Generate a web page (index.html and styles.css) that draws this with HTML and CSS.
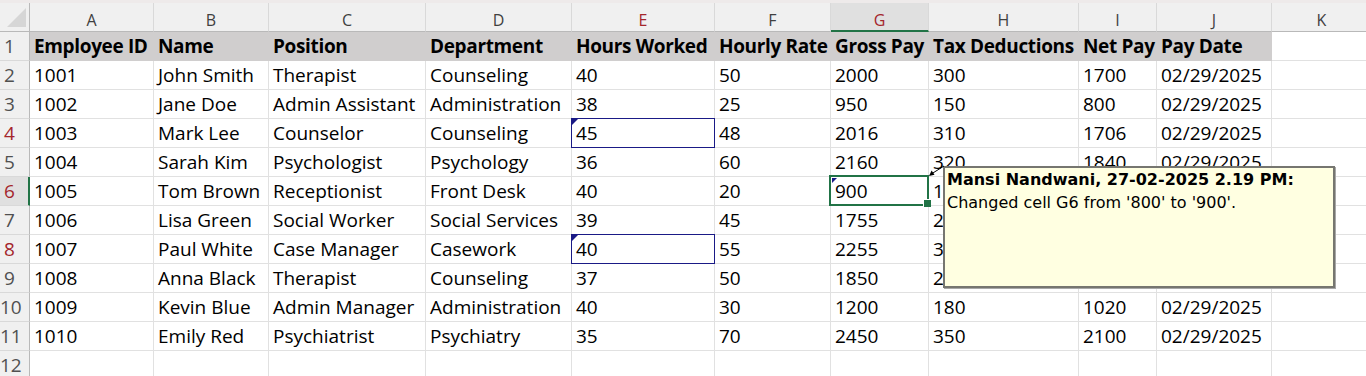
FILE: index.html
```html
<!DOCTYPE html>
<html lang="en">
<head>
<meta charset="utf-8">
<title>Payroll sheet</title>
<link rel="stylesheet" href="styles.css">
</head>
<body>
<div class="topbar"></div>
<div class="sheet">
  <div class="corner"><svg class="corner-tri" width="29" height="28" viewBox="0 0 29 28"><polygon points="26,5 26,24 7,24" fill="#d6d6d6"/></svg></div>
  <div class="h">A</div><div class="h">B</div><div class="h">C</div><div class="h">D</div>
  <div class="h red">E</div><div class="h">F</div><div class="h red active-col">G</div><div class="h">H</div>
  <div class="h">I</div><div class="h">J</div><div class="h">K</div>

  <div class="r">1</div>
  <div class="c t">Employee ID</div><div class="c t">Name</div><div class="c t">Position</div><div class="c t">Department</div><div class="c t">Hours Worked</div><div class="c t">Hourly Rate</div><div class="c t">Gross Pay</div><div class="c t">Tax Deductions</div><div class="c t">Net Pay</div><div class="c t">Pay Date</div><div class="c"></div>

  <div class="r">2</div>
  <div class="c">1001</div><div class="c">John Smith</div><div class="c">Therapist</div><div class="c">Counseling</div><div class="c">40</div><div class="c">50</div><div class="c">2000</div><div class="c">300</div><div class="c">1700</div><div class="c">02/29/2025</div><div class="c"></div>

  <div class="r">3</div>
  <div class="c">1002</div><div class="c">Jane Doe</div><div class="c">Admin Assistant</div><div class="c">Administration</div><div class="c">38</div><div class="c">25</div><div class="c">950</div><div class="c">150</div><div class="c">800</div><div class="c">02/29/2025</div><div class="c"></div>

  <div class="r red">4</div>
  <div class="c">1003</div><div class="c">Mark Lee</div><div class="c">Counselor</div><div class="c">Counseling</div><div class="c changed">45</div><div class="c">48</div><div class="c">2016</div><div class="c">310</div><div class="c">1706</div><div class="c">02/29/2025</div><div class="c"></div>

  <div class="r">5</div>
  <div class="c">1004</div><div class="c">Sarah Kim</div><div class="c">Psychologist</div><div class="c">Psychology</div><div class="c">36</div><div class="c">60</div><div class="c">2160</div><div class="c">320</div><div class="c">1840</div><div class="c">02/29/2025</div><div class="c"></div>

  <div class="r red active-row">6</div>
  <div class="c">1005</div><div class="c">Tom Brown</div><div class="c">Receptionist</div><div class="c">Front Desk</div><div class="c">40</div><div class="c">20</div>
  <div class="c selected">900
    <span class="handle"></span>
    <svg class="arrow" width="20" height="14" viewBox="0 0 20 14"><line x1="3.5" y1="10.5" x2="17" y2="2" stroke="#000" stroke-width="1"/><polygon points="2,12 7.5,10.8 4.6,6.6" fill="#000"/></svg>
    <div class="note">
      <div class="note-author">Mansi Nandwani, 27-02-2025 2.19 PM:</div>
      <div class="note-text">Changed cell G6 from '800' to '900'.</div>
    </div>
  </div>
  <div class="c">120</div><div class="c"></div><div class="c"></div><div class="c"></div>

  <div class="r">7</div>
  <div class="c">1006</div><div class="c">Lisa Green</div><div class="c">Social Worker</div><div class="c">Social Services</div><div class="c">39</div><div class="c">45</div><div class="c">1755</div><div class="c">263</div><div class="c"></div><div class="c"></div><div class="c"></div>

  <div class="r red">8</div>
  <div class="c">1007</div><div class="c">Paul White</div><div class="c">Case Manager</div><div class="c">Casework</div><div class="c changed">40</div><div class="c">55</div><div class="c">2255</div><div class="c">338</div><div class="c"></div><div class="c"></div><div class="c"></div>

  <div class="r">9</div>
  <div class="c">1008</div><div class="c">Anna Black</div><div class="c">Therapist</div><div class="c">Counseling</div><div class="c">37</div><div class="c">50</div><div class="c">1850</div><div class="c">277</div><div class="c"></div><div class="c"></div><div class="c"></div>

  <div class="r">10</div>
  <div class="c">1009</div><div class="c">Kevin Blue</div><div class="c">Admin Manager</div><div class="c">Administration</div><div class="c">40</div><div class="c">30</div><div class="c">1200</div><div class="c">180</div><div class="c">1020</div><div class="c">02/29/2025</div><div class="c"></div>

  <div class="r">11</div>
  <div class="c">1010</div><div class="c">Emily Red</div><div class="c">Psychiatrist</div><div class="c">Psychiatry</div><div class="c">35</div><div class="c">70</div><div class="c">2450</div><div class="c">350</div><div class="c">2100</div><div class="c">02/29/2025</div><div class="c"></div>

  <div class="r">12</div>
  <div class="c"></div><div class="c"></div><div class="c"></div><div class="c"></div><div class="c"></div><div class="c"></div><div class="c"></div><div class="c"></div><div class="c"></div><div class="c"></div><div class="c"></div>
</div>
</body>
</html>
```

FILE: styles.css
```css
html, body {
  margin: 0;
  padding: 0;
  background: #ffffff;
  overflow: hidden;
}

body {
  font-family: "Open Sans", "Noto Sans", sans-serif;
  width: 1366px;
  height: 376px;
}

.topbar {
  height: 3px;
  background: #eeeaea;
}

.sheet {
  display: grid;
  grid-template-columns: 30px 124px 115px 157px 146px 143px 116px 98px 150px 78px 115px 100px;
  grid-auto-rows: 29px;
  width: 1372px;
}

.corner {
  box-sizing: border-box;
  background: #f0f0f0;
  border-right: 1px solid #b9b9b9;
  border-bottom: 1px solid #b9b9b9;
}

.corner-tri {
  display: block;
}

.h {
  box-sizing: border-box;
  background: #f0f0f0;
  border-right: 1px solid #d9d9d9;
  border-bottom: 1px solid #b9b9b9;
  display: flex;
  align-items: flex-end;
  justify-content: center;
  padding-bottom: 3px;
  font-size: 16px;
  line-height: 1;
  color: #404040;
}

.h.active-col {
  background: #e0e0e0;
  border-bottom: 2px solid #217346;
  padding-bottom: 2px;
}

.r {
  box-sizing: border-box;
  background: #f0f0f0;
  border-right: 1px solid #b9b9b9;
  border-bottom: 1px solid #d9d9d9;
  text-align: center;
  padding-right: 10px;
  font-size: 19px;
  line-height: 28px;
  color: #505050;
  white-space: nowrap;
}

.r.active-row {
  background: #e0e0e0;
  border-right: 2px solid #217346;
  padding-right: 9px;
}

.h.red,
.r.red {
  color: #a4262c;
}

.c {
  box-sizing: border-box;
  border-right: 1px solid #e1e1e1;
  border-bottom: 1px solid #e1e1e1;
  padding-left: 4px;
  font-size: 19px;
  line-height: 28px;
  color: #000000;
  white-space: nowrap;
}

.c.t {
  background: #d0cece;
  border-right-color: #d0cece;
  border-bottom-color: #d0cece;
  font-weight: 700;
  letter-spacing: -0.35px;
}

.changed {
  position: relative;
}

.changed::before {
  content: "";
  position: absolute;
  left: -1px;
  top: -1px;
  right: -1px;
  bottom: -1px;
  border: 1px solid #1a1a86;
}

.changed::after,
.selected::before {
  content: "";
  position: absolute;
  left: 0;
  top: 0;
  width: 0;
  height: 0;
  border-top: 6px solid #1a1a86;
  border-right: 6px solid transparent;
}

.selected {
  position: relative;
}

.selected::after {
  content: "";
  position: absolute;
  left: -2px;
  top: -2px;
  width: 100px;
  height: 31px;
  box-sizing: border-box;
  border: 2px solid #217346;
}

.selected::before {
  top: 1px;
  left: 1px;
  border-top-width: 5px;
  border-right-width: 5px;
}

.handle {
  position: absolute;
  left: 92px;
  top: 22px;
  width: 7px;
  height: 7px;
  background: #217346;
  border-left: 1px solid #ffffff;
  border-top: 1px solid #ffffff;
  z-index: 2;
}

.selected .arrow {
  position: absolute;
  left: 96px;
  top: -13px;
  z-index: 11;
}

.note {
  position: absolute;
  left: 112px;
  top: -11px;
  width: 392px;
  height: 122px;
  box-sizing: border-box;
  background: #ffffe1;
  border: 2px solid #767670;
  box-shadow: 1px 1px 0 #a8a8a8;
  padding: 0 0 0 2px;
  font-family: "DejaVu Sans", sans-serif;
  font-size: 16px;
  line-height: 23px;
  color: #000000;
  z-index: 10;
}

.note-author {
  font-weight: 700;
}

.note-text {
  font-weight: 400;
}
```
